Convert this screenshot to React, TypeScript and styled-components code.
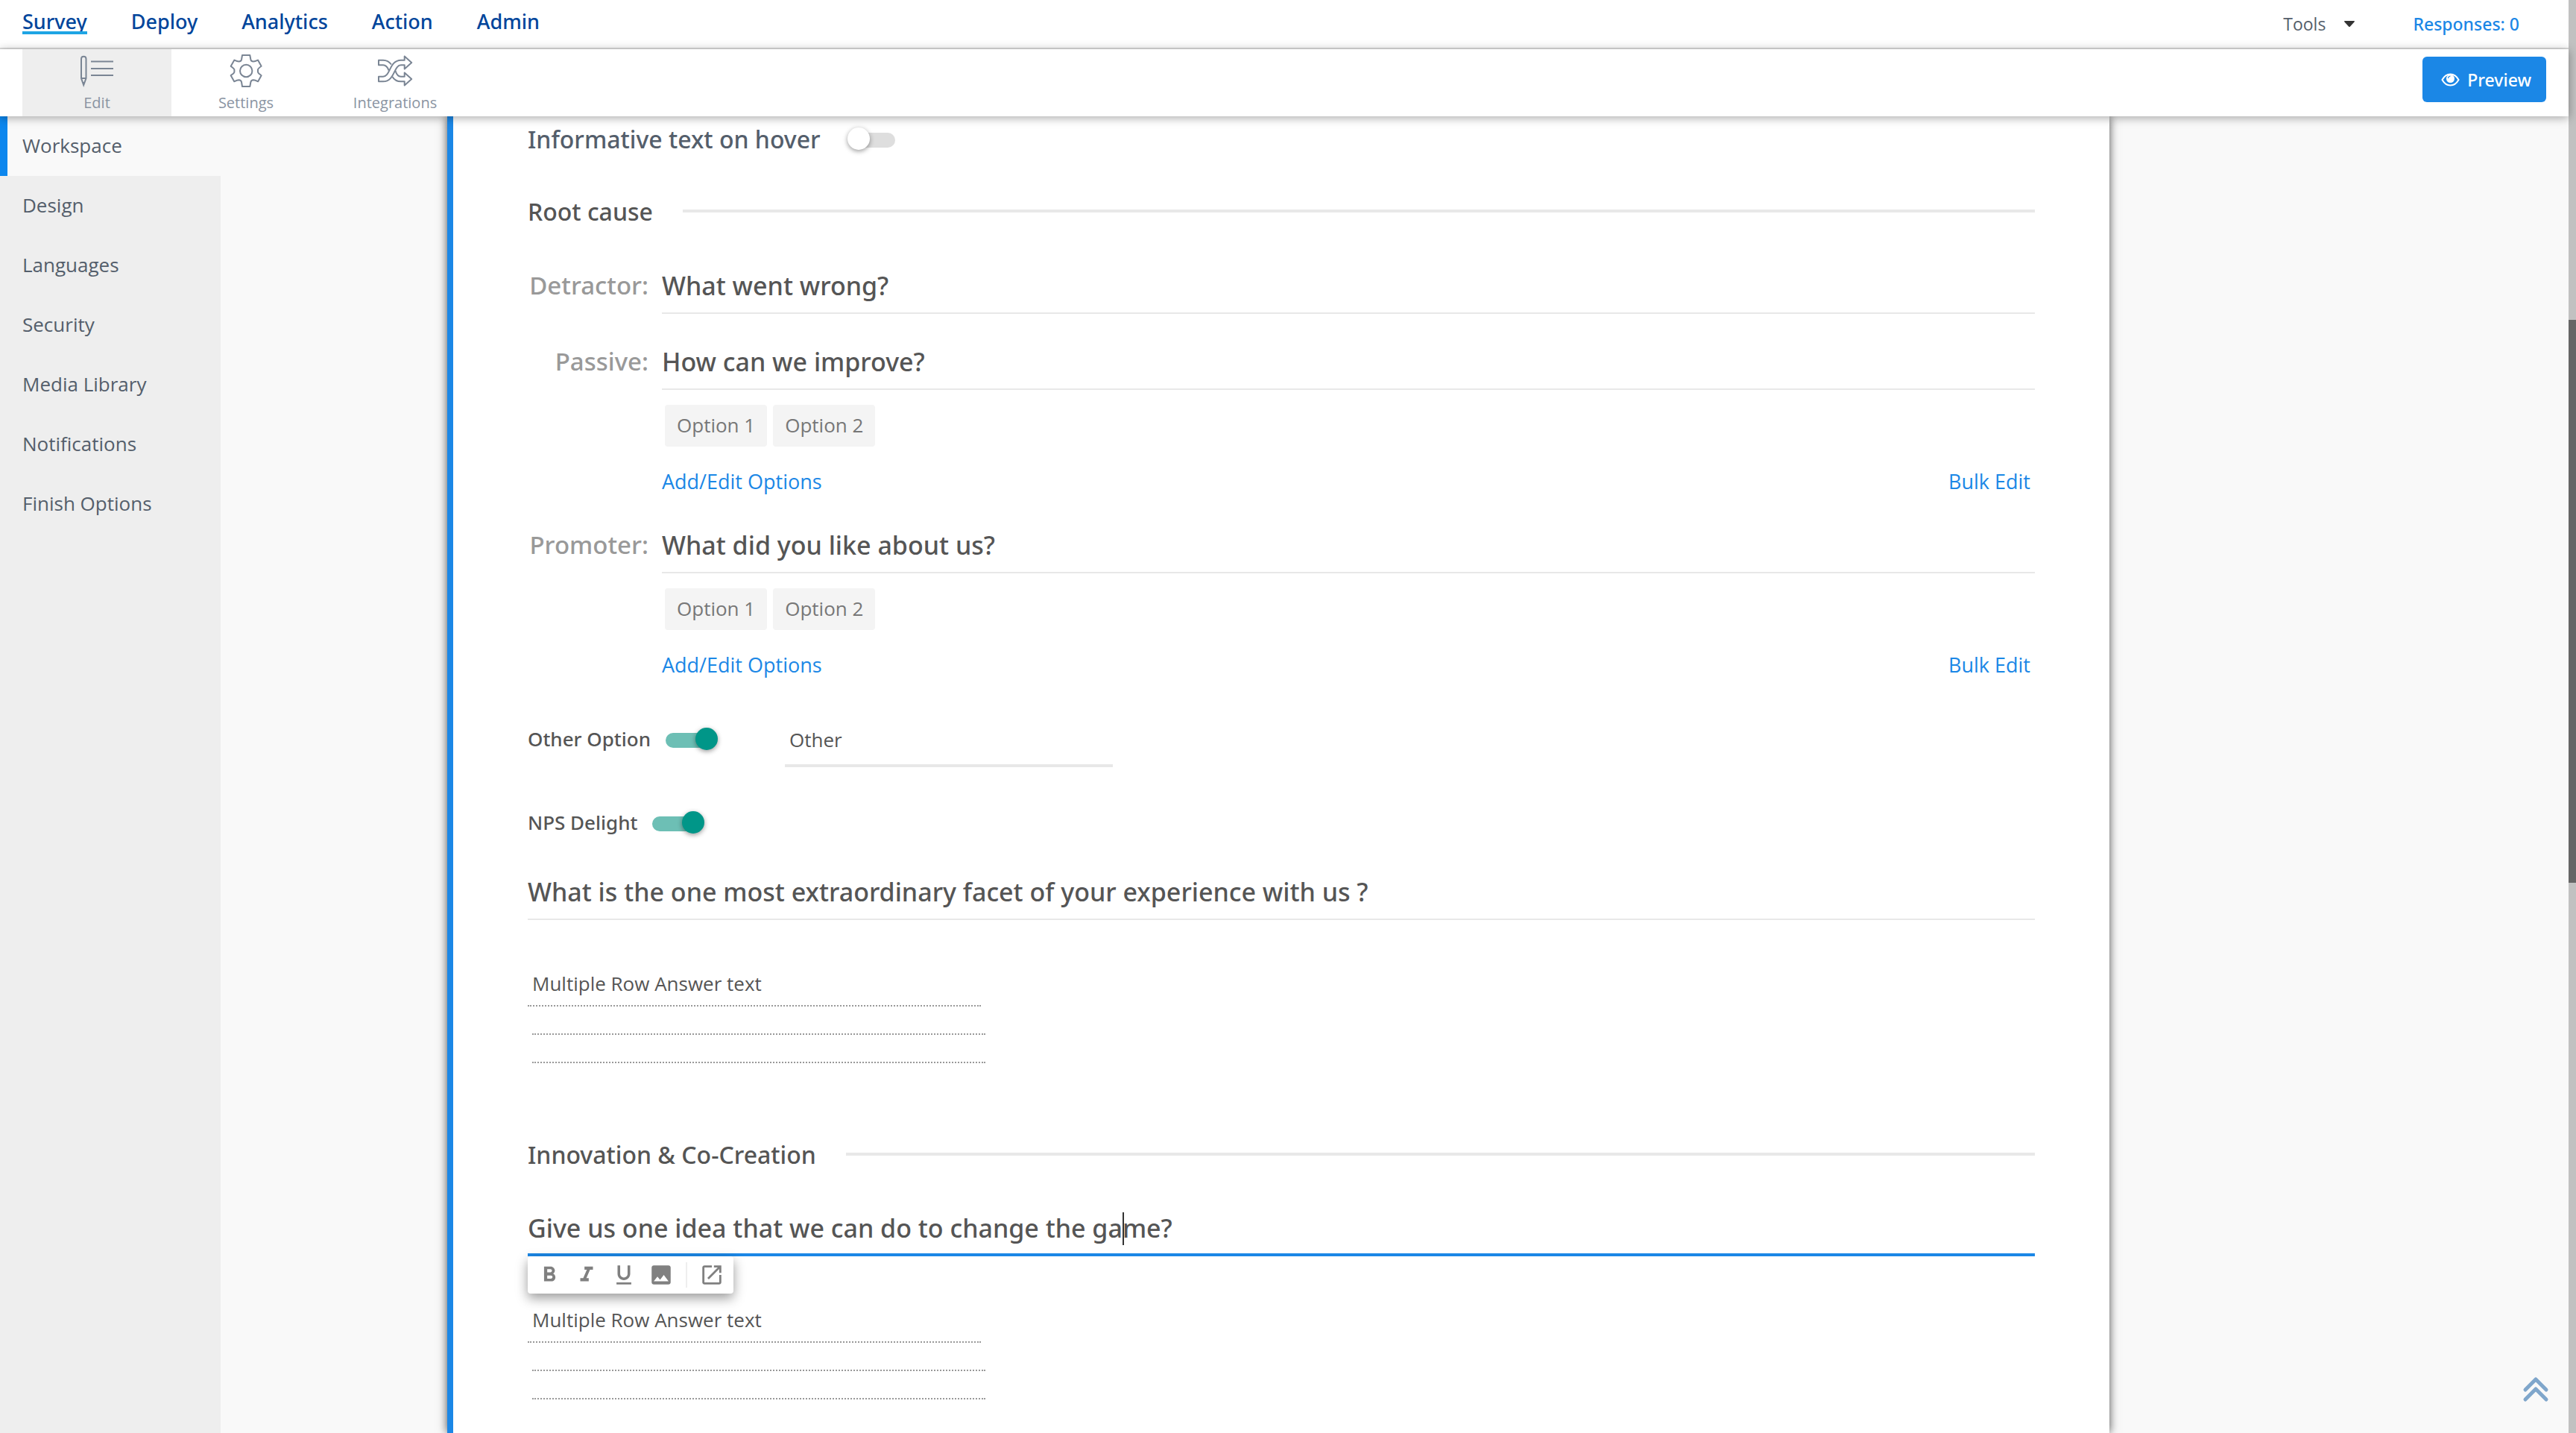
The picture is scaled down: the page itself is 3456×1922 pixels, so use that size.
import React, { useState } from "react";
import styled, { createGlobalStyle, css } from "styled-components";

const BLUE = "#1b87e6";
const RULE = "#e8e8e8";

const medium = css`
  font-family: "Noto Sans", "Open Sans", sans-serif;
  font-weight: 500;
`;

const GlobalStyle = createGlobalStyle`
  *, *::before, *::after { box-sizing: border-box; }
  body {
    margin: 0;
    background: #f9f9f9;
    color: #555;
    font-family: "Open Sans", "Noto Sans", sans-serif;
    font-size: 26px;
  }
  button, input { font: inherit; color: inherit; }
  button { border: 0; background: none; padding: 0; cursor: pointer; }
  a { text-decoration: none; color: inherit; }
`;

const Window = styled.div`
  display: flex;
  height: 100vh;
  overflow: hidden;
`;

const Page = styled.div`
  flex: 1;
  min-width: 0;
  display: flex;
  flex-direction: column;
`;

const ScrollTrack = styled.div`
  width: 10px;
  background: #c1c1c1;
  padding-top: 429px;
`;

const ScrollThumb = styled.div`
  height: 755px;
  background: #666;
`;

const TopBar = styled.header`
  flex: none;
  display: flex;
  justify-content: space-between;
  height: 66px;
  padding: 0 66px 0 30px;
  background: #fff;
  border-bottom: 2px solid #ddd;
`;

const MainNav = styled.nav`
  display: flex;
  gap: 59px;
`;

const NavLink = styled.a<{ $active?: boolean }>`
  ${medium}
  position: relative;
  font-size: 27px;
  line-height: 58px;
  color: #00459b;
  ${(p) =>
    p.$active &&
    css`
      &::after {
        content: "";
        position: absolute;
        left: 0;
        right: 0;
        bottom: 18px;
        height: 4px;
        background: #1ea5e4;
      }
    `}
`;

const Account = styled.div`
  display: flex;
  gap: 77px;
  font-size: 23px;
  line-height: 64px;
`;

const ToolsButton = styled.button`
  display: flex;
  align-items: center;
  gap: 24px;
  color: #545e6b;
`;

const Responses = styled.a`
  ${medium}
  color: ${BLUE};
`;

const ToolBar = styled.div`
  flex: none;
  position: relative;
  z-index: 2;
  display: flex;
  justify-content: space-between;
  align-items: flex-start;
  height: 90px;
  padding: 0 30px;
  background: #fff;
  box-shadow: 0 2px 12px rgba(0, 0, 0, 0.35);
`;

const Tabs = styled.nav`
  display: flex;
  height: 100%;
`;

const Tab = styled.a<{ $active?: boolean }>`
  display: flex;
  flex-direction: column;
  align-items: center;
  width: 200px;
  padding-top: 6px;
  font-size: 20px;
  line-height: 32px;
  color: #8a94a2;
  background: ${(p) => (p.$active ? "#eee" : "transparent")};
  & > svg {
    height: 46px;
    margin-bottom: 4px;
  }
`;

const PreviewButton = styled.button`
  ${medium}
  display: flex;
  align-items: center;
  gap: 10px;
  height: 61px;
  margin-top: 10px;
  padding: 0 20px 0 25px;
  border-radius: 6px;
  background: ${BLUE};
  color: #fff;
  font-size: 23px;
`;

const Body = styled.div`
  flex: 1;
  min-height: 0;
  display: flex;
`;

const Sidebar = styled.nav`
  flex: none;
  width: 296px;
  background: #eee;
`;

const SideLink = styled.a<{ $active?: boolean }>`
  display: block;
  height: 80px;
  padding-left: ${(p) => (p.$active ? 20 : 30)}px;
  border-left: ${(p) => (p.$active ? `10px solid #0c87ee` : "0")};
  background: ${(p) => (p.$active ? "#f9f9f9" : "transparent")};
  color: #545e6b;
  line-height: 78px;
`;

const Card = styled.main`
  flex: 1;
  min-width: 0;
  margin: 0 616px 0 304px;
  padding: 0 100px;
  border-left: 8px solid ${BLUE};
  background: #fff;
  box-shadow: 0 0 12px rgba(0, 0, 0, 0.7);
`;

const SwitchLabel = styled.label<{ $large?: boolean }>`
  ${medium}
  display: flex;
  align-items: center;
  gap: ${(p) => (p.$large ? 36 : 20)}px;
  height: 60px;
  font-size: ${(p) => (p.$large ? 32 : 26)}px;
  color: ${(p) => (p.$large ? "#545e6b" : "#555")};
`;

const Switch = styled.input.attrs({ type: "checkbox" })`
  appearance: none;
  position: relative;
  width: 70px;
  height: 30px;
  margin: 0;
  &::before {
    content: "";
    position: absolute;
    left: 2px;
    top: 7px;
    width: 62px;
    height: 20px;
    border-radius: 10px;
    background: #dedede;
  }
  &::after {
    content: "";
    position: absolute;
    left: 0;
    top: 0;
    width: 30px;
    height: 30px;
    border-radius: 50%;
    background: #fff;
    box-shadow: 0 2px 6px rgba(0, 0, 0, 0.4);
  }
  &:checked::before { left: 0; background: #6dbfb5; }
  &:checked::after { left: 40px; background: #009688; }
`;

const SectionTitle = styled.h2<{ $gap: number }>`
  ${medium}
  display: flex;
  align-items: center;
  gap: 40px;
  height: 46px;
  margin: ${(p) => p.$gap}px 0 0;
  font-size: 32px;
  &::after {
    content: "";
    flex: 1;
    height: 4px;
    background: ${RULE};
  }
`;

const RootCause = styled.div<{ $gap: number }>`
  display: grid;
  grid-template-columns: 180px 1fr;
  margin-top: ${(p) => p.$gap}px;
`;

const CauseLabel = styled.label`
  ${medium}
  padding-right: 18px;
  text-align: right;
  font-size: 33px;
  line-height: 60px;
  color: #999;
`;

const QuestionInput = styled.input<{ $gap?: number; $editing?: boolean }>`
  ${medium}
  display: block;
  width: 100%;
  height: ${(p) => (p.$editing ? 70 : 68)}px;
  margin: ${(p) => p.$gap ?? 0}px 0 0;
  padding: 0 0 ${(p) => (p.$editing ? 2 : 6)}px;
  border: 0;
  border-bottom: ${(p) => (p.$editing ? `4px solid ${BLUE}` : `2px solid ${RULE}`)};
  border-radius: 0;
  outline: 0;
  background: transparent;
  font-size: 34px;
`;

const Options = styled.div`
  grid-column: 2;
  display: flex;
  gap: 8px;
  padding: 20px 4px 0;
`;

const OptionChip = styled.button`
  height: 56px;
  padding: 0 16px 2px;
  border-radius: 4px;
  background: #f4f4f4;
  color: #777;
`;

const OptionActions = styled.div`
  grid-column: 2;
  display: flex;
  justify-content: space-between;
  padding: 27px 6px 0 0;
  font-size: 27px;
  line-height: 40px;
`;

const TextButton = styled.button`
  color: ${BLUE};
`;

const OtherRow = styled.div`
  display: flex;
  gap: 90px;
  margin-top: 49px;
`;

const OtherInput = styled.input`
  width: 440px;
  height: 68px;
  padding: 0 6px 2px;
  border: 0;
  border-bottom: 4px solid ${RULE};
  outline: 0;
  background: transparent;
`;

const DelightRow = styled.div`
  margin-top: 44px;
`;

const Answer = styled.div`
  width: 614px;
  margin-top: 66px;
  & > hr {
    height: 38px;
    margin: 0 0 0 6px;
    border: 0;
    border-bottom: 2px dotted #999;
  }
`;

const AnswerInput = styled.input`
  display: block;
  width: 608px;
  height: 50px;
  padding: 0 6px 10px;
  border: 0;
  border-bottom: 2px dotted #999;
  outline: 0;
  background: transparent;
  &::placeholder { color: #555; opacity: 1; }
`;

const Editor = styled.div`
  position: relative;
  margin-top: 44px;
`;

const Caret = styled.span`
  position: absolute;
  left: 798px;
  top: 11px;
  width: 2px;
  height: 44px;
  background: #333;
`;

const FormatBar = styled.div`
  position: absolute;
  left: 0;
  top: 100%;
  display: flex;
  align-items: center;
  height: 50px;
  padding: 0 4px;
  border-radius: 4px;
  background: #fff;
  box-shadow: 0 6px 16px rgba(0, 0, 0, 0.4);
`;

const FormatButton = styled.button`
  display: grid;
  place-items: center;
  width: 50px;
  height: 50px;
`;

const Divider = styled.span`
  width: 2px;
  height: 34px;
  margin: 0 8px;
  background: #eee;
`;

const BackToTop = styled.button`
  position: fixed;
  right: 34px;
  bottom: 40px;
  display: block;
  width: 38px;
  height: 38px;
`;

const EditIcon = () => (
  <svg width="46" height="46" viewBox="0 0 46 46" fill="none" stroke="#7a8594" strokeWidth="2">
    <path d="M2 33V7C2 2.500 8.500 2.500 8.500 7V33L5.200 42ZM2 33H8.500M5.200 38V42" />
    <path d="M15 10.500H45M15 20H45M15 29H45" />
  </svg>
);

const GearIcon = () => (
  <svg width="44" height="46" viewBox="0 0 44 46" fill="none" stroke="#7a8594" strokeWidth="2" strokeLinejoin="round">
    <path d="M17 2H27.300L28.400 8Q29 10.500 32 10.500Q34 10.500 38 8.600L42.600 16.800Q38 20 38 21.500V24.500Q38 26 42.600 29.200L38.200 37.300Q34 35.300 32 35.300Q29 35.500 28.400 38L27.300 44H17L16 38Q15.400 35.500 12.400 35.300Q10.400 35.300 6.200 37.300L1.700 29.200Q6.400 26 6.400 24.500V21.500Q6.400 20 1.700 16.800L6.400 8.600Q10.400 10.500 12.400 10.500Q15.400 10.500 16 8Z" />
    <circle cx="22.200" cy="23" r="8.200" />
  </svg>
);

const ShuffleIcon = () => (
  <svg width="48" height="46" viewBox="0 0 48 46" fill="none" stroke="#7a8594" strokeWidth="2" strokeLinejoin="round">
    <path d="M19 14.500C16 10.500 12 8.700 8 8.700H2V15.300H8C12 15.300 14 18 15.500 22.500" />
    <path d="M2 37.300V30.700H8C18 30.700 16 8.700 32 8.700H36.700V3.500L46.200 12L36.700 20.500V15.300H32C22 15.300 24 37.300 8 37.300Z" />
    <path d="M24.500 23C26 28 28 30.700 32 30.700H36.700V25.500L46.200 34L36.700 42.500V37.300H32C26 37.300 22.500 34.500 20.500 31" />
  </svg>
);

const EyeIcon = () => (
  <svg width="25" height="18" viewBox="0 0 25 18" fill="none" stroke="#fff" strokeWidth="2">
    <path d="M1.500 9C7 -1 18 -1 23.500 9C18 19 7 19 1.500 9Z" />
    <circle cx="12.500" cy="7.500" r="5.500" fill="#fff" stroke="none" />
    <path d="M9.500 7C9.700 5 11 4.200 12.500 4" stroke={BLUE} strokeWidth="1.200" />
  </svg>
);

const MaterialIcon = ({ d }: { d: string }) => (
  <svg width="34" height="34" viewBox="0 0 24 24" fill="#808080">
    <path d={d} />
  </svg>
);

const formats = [
  { name: "Bold", d: "M15.600 10.790c.970-.670 1.650-1.770 1.650-2.790 0-2.260-1.750-4-4-4H7v14h7.040c2.090 0 3.710-1.700 3.710-3.790 0-1.520-.860-2.820-2.150-3.420zM10 6.500h3c.830 0 1.500.670 1.500 1.500s-.670 1.500-1.500 1.500h-3v-3zm3.500 9H10v-3h3.500c.830 0 1.500.670 1.500 1.500s-.670 1.500-1.500 1.500z" },
  { name: "Italic", d: "M10 4v3h2.210l-3.420 8H6v3h8v-3h-2.210l3.420-8H18V4z" },
  { name: "Underline", d: "M12 17c3.310 0 6-2.690 6-6V3h-2.500v8c0 1.930-1.570 3.500-3.500 3.500S8.500 12.930 8.500 11V3H6v8c0 3.310 2.690 6 6 6zm-7 2v2h14v-2H5z" },
  { name: "Insert image", d: "M21 19V5c0-1.100-.900-2-2-2H5c-1.100 0-2 .900-2 2v14c0 1.100.900 2 2 2h14c1.100 0 2-.900 2-2zM8.500 13.500l2.500 3.010L14.500 12l4.500 6H5l3.500-4.500z" },
];

const openInNew =
  "M19 19H5V5h7V3H5c-1.110 0-2 .900-2 2v14c0 1.100.890 2 2 2h14c1.100 0 2-.900 2-2v-7h-2v7zM14 3v2h3.590l-9.830 9.830 1.410 1.410L19 6.410V10h2V3h-7z";

const mainNav = ["Survey", "Deploy", "Analytics", "Action", "Admin"];
const sideNav = ["Workspace", "Design", "Languages", "Security", "Media Library", "Notifications", "Finish Options"];
const tabs = [
  { label: "Edit", icon: <EditIcon /> },
  { label: "Settings", icon: <GearIcon /> },
  { label: "Integrations", icon: <ShuffleIcon /> },
];

function Toggle({ label, on, large }: { label: string; on?: boolean; large?: boolean }) {
  const [checked, setChecked] = useState(!!on);
  return (
    <SwitchLabel $large={large}>
      {label}
      <Switch checked={checked} onChange={(e) => setChecked(e.target.checked)} />
    </SwitchLabel>
  );
}

function Cause({ id, label, question, options = [], gap }: { id: string; label: string; question: string; options?: string[]; gap: number }) {
  return (
    <RootCause $gap={gap}>
      <CauseLabel htmlFor={id}>{label}:</CauseLabel>
      <QuestionInput id={id} defaultValue={question} />
      {options.length > 0 && (
        <>
          <Options>
            {options.map((option) => (
              <OptionChip key={option}>{option}</OptionChip>
            ))}
          </Options>
          <OptionActions>
            <TextButton>Add/Edit Options</TextButton>
            <TextButton>Bulk Edit</TextButton>
          </OptionActions>
        </>
      )}
    </RootCause>
  );
}

function MultiRowAnswer({ label }: { label: string }) {
  return (
    <Answer>
      <AnswerInput aria-label={label} placeholder="Multiple Row Answer text" />
      <hr />
      <hr />
    </Answer>
  );
}

export default function App() {
  return (
    <Window>
      <GlobalStyle />
      <Page>
        <TopBar>
          <MainNav>
            {mainNav.map((item) => (
              <NavLink key={item} href="#" $active={item === "Survey"}>
                {item}
              </NavLink>
            ))}
          </MainNav>
          <Account>
            <ToolsButton>
              Tools
              <svg width="16" height="10" viewBox="0 0 16 10" fill="#333">
                <path d="M2 1H14Q16 1 14.500 2.500L9 8.500Q8 9.500 7 8.500L1.500 2.500Q0 1 2 1Z" />
              </svg>
            </ToolsButton>
            <Responses href="#">Responses: 0</Responses>
          </Account>
        </TopBar>
        <ToolBar>
          <Tabs>
            {tabs.map((tab) => (
              <Tab key={tab.label} href="#" $active={tab.label === "Edit"}>
                {tab.icon}
                {tab.label}
              </Tab>
            ))}
          </Tabs>
          <PreviewButton>
            <EyeIcon />
            Preview
          </PreviewButton>
        </ToolBar>
        <Body>
          <Sidebar>
            {sideNav.map((item) => (
              <SideLink key={item} href="#" $active={item === "Workspace"}>
                {item}
              </SideLink>
            ))}
          </Sidebar>
          <Card>
            <Toggle label="Informative text on hover" large />
            <SectionTitle $gap={44}>Root cause</SectionTitle>
            <Cause id="detractor" label="Detractor" question="What went wrong?" gap={47} />
            <Cause id="passive" label="Passive" question="How can we improve?" options={["Option 1", "Option 2"]} gap={34} />
            <Cause id="promoter" label="Promoter" question="What did you like about us?" options={["Option 1", "Option 2"]} gap={35} />
            <OtherRow>
              <Toggle label="Other Option" on />
              <OtherInput aria-label="Other option text" defaultValue="Other" />
            </OtherRow>
            <DelightRow>
              <Toggle label="NPS Delight" on />
            </DelightRow>
            <QuestionInput
              $gap={33}
              aria-label="Delight question"
              defaultValue="What is the one most extraordinary facet of your experience with us ?"
            />
            <MultiRowAnswer label="Delight answer" />
            <SectionTitle $gap={99}>Innovation &amp; Co-Creation</SectionTitle>
            <Editor>
              <QuestionInput
                $editing
                aria-label="Innovation question"
                defaultValue="Give us one idea that we can do to change the game?"
              />
              <Caret />
              <FormatBar>
                {formats.map((format) => (
                  <FormatButton key={format.name} aria-label={format.name}>
                    <MaterialIcon d={format.d} />
                  </FormatButton>
                ))}
                <Divider />
                <FormatButton aria-label="Open editor">
                  <MaterialIcon d={openInNew} />
                </FormatButton>
              </FormatBar>
            </Editor>
            <MultiRowAnswer label="Innovation answer" />
          </Card>
        </Body>
      </Page>
      <ScrollTrack>
        <ScrollThumb />
      </ScrollTrack>
      <BackToTop aria-label="Back to top">
        <svg width="38" height="38" viewBox="0 0 38 38" fill="none" stroke="#7fa6cb" strokeWidth="5" strokeLinecap="round" strokeLinejoin="round">
          <path d="M4 20L18 6L32 20M4 33L18 19L32 33" />
        </svg>
      </BackToTop>
    </Window>
  );
}
